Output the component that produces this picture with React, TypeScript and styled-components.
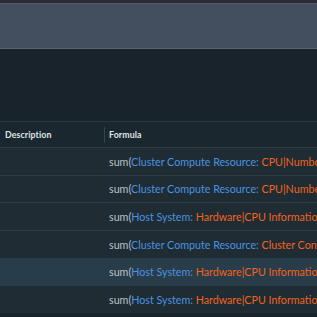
import styled, { createGlobalStyle } from "styled-components";
import React from "react";

const GlobalStyle = createGlobalStyle`
  html, body {
    margin: 0;
    padding: 0;
    background: #18232b;
    overflow: hidden;
  }
`;

interface IRow {
  object: string;
  metric: string;
}

const rows: IRow[] = [
  { object: "Cluster Compute Resource", metric: "CPU|Number of physical CPUs" },
  { object: "Cluster Compute Resource", metric: "CPU|Number of CPU Sockets" },
  { object: "Host System", metric: "Hardware|CPU Information|Number of CPUs" },
  { object: "Cluster Compute Resource", metric: "Cluster Configuration|Total CPU" },
  { object: "Host System", metric: "Hardware|CPU Information|CPU Cores" },
  { object: "Host System", metric: "Hardware|CPU Information|Threads" },
];

// 5번째 줄이 선택된 상태
const SELECTED = 4;

export default function App() {
  return (
    <>
      <GlobalStyle />
      <Page>
        <TopStrip />
        <Banner />
        <Spacer />
        <Table>
          <HeaderRow>
            <HeadCell>Description</HeadCell>
            <HeadCell divider>Formula</HeadCell>
          </HeaderRow>
          {rows.map((row, i) => (
            <Row key={i} selected={i === SELECTED}>
              <Cell />
              <Cell>
                <Plain>sum(</Plain>
                <ObjectName>{row.object}: </ObjectName>
                <Metric>{row.metric}</Metric>
              </Cell>
            </Row>
          ))}
        </Table>
      </Page>
    </>
  );
}

const Page = styled.div`
  width: 317px;
  height: 317px;
  display: flex;
  flex-direction: column;
  font-family: "Lato", "Open Sans", sans-serif;
  overflow: hidden;
`;

const TopStrip = styled.div`
  height: 3px;
  background: #2a2a35;
  border-bottom: 1px solid #4d5a6b;
`;

const Banner = styled.div`
  height: 44px;
  background: #434f5f;
  border-bottom: 1px solid #566273;
`;

const Spacer = styled.div`
  height: 72px;
  background: #18232b;
  border-bottom: 1px solid #2a3840;
`;

const Table = styled.div`
  display: flex;
  flex-direction: column;
`;

const HeaderRow = styled.div`
  display: grid;
  grid-template-columns: 104px 1fr;
  height: 25px;
  background: #1b272f;
  align-items: center;
`;

const HeadCell = styled.div<{ divider?: boolean }>`
  height: 16px;
  display: flex;
  align-items: center;
  padding-left: ${(p) => (p.divider ? "4px" : "5px")};
  border-left: ${(p) => (p.divider ? "1px solid #33424b" : "none")};
  font-size: 8.8px;
  font-weight: 700;
  color: #dfe5e8;
  letter-spacing: 0.1px;
`;

const Row = styled.div<{ selected?: boolean }>`
  display: grid;
  grid-template-columns: 104px 1fr;
  box-sizing: border-box;
  height: 27.67px;
  align-items: center;
  background: ${(p) => (p.selected ? "#283c4a" : "#1f2c34")};
  border-top: 1px solid #2d3b44;
`;

const Cell = styled.div`
  padding-left: 5px;
  white-space: nowrap;
  overflow: hidden;
  font-size: 10.7px;
`;

const Plain = styled.span`
  color: #b9c3c8;
`;

const ObjectName = styled.span`
  color: #4b93e0;
`;

const Metric = styled.span`
  color: #f0641e;
`;
